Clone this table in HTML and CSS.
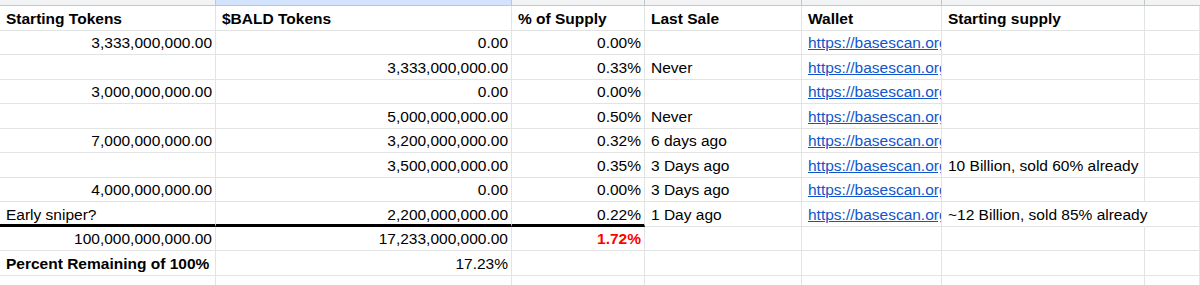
FILE: index.html
```html
<!DOCTYPE html>
<html lang="en">
<head>
<meta charset="utf-8">
<title>$BALD Tokens</title>
<link rel="stylesheet" href="styles.css">
</head>
<body>
<div class="sheet">
  <div class="hd"></div><div class="hd sel"></div><div class="hd"></div><div class="hd"></div><div class="hd"></div><div class="hd"></div><div class="hd last"></div>

  <div class="c b">Starting Tokens</div><div class="c b">$BALD Tokens</div><div class="c b">% of Supply</div><div class="c b">Last Sale</div><div class="c b">Wallet</div><div class="c b">Starting supply</div><div class="c"></div>

  <div class="c r">3,333,000,000.00</div><div class="c r">0.00</div><div class="c r">0.00%</div><div class="c"></div><div class="c lc"><a class="lnk" href="#">https://basescan.org/address</a></div><div class="c"></div><div class="c"></div>

  <div class="c"></div><div class="c r">3,333,000,000.00</div><div class="c r">0.33%</div><div class="c">Never</div><div class="c lc"><a class="lnk" href="#">https://basescan.org/address</a></div><div class="c"></div><div class="c"></div>

  <div class="c r">3,000,000,000.00</div><div class="c r">0.00</div><div class="c r">0.00%</div><div class="c"></div><div class="c lc"><a class="lnk" href="#">https://basescan.org/address</a></div><div class="c"></div><div class="c"></div>

  <div class="c"></div><div class="c r">5,000,000,000.00</div><div class="c r">0.50%</div><div class="c">Never</div><div class="c lc"><a class="lnk" href="#">https://basescan.org/address</a></div><div class="c"></div><div class="c"></div>

  <div class="c r">7,000,000,000.00</div><div class="c r">3,200,000,000.00</div><div class="c r">0.32%</div><div class="c">6 days ago</div><div class="c lc"><a class="lnk" href="#">https://basescan.org/address</a></div><div class="c"></div><div class="c"></div>

  <div class="c"></div><div class="c r">3,500,000,000.00</div><div class="c r">0.35%</div><div class="c">3 Days ago</div><div class="c lc"><a class="lnk" href="#">https://basescan.org/address</a></div><div class="c">10 Billion, sold 60% already</div><div class="c"></div>

  <div class="c r">4,000,000,000.00</div><div class="c r">0.00</div><div class="c r">0.00%</div><div class="c">3 Days ago</div><div class="c lc"><a class="lnk" href="#">https://basescan.org/address</a></div><div class="c"></div><div class="c"></div>

  <div class="c thick">Early sniper?</div><div class="c r thick">2,200,000,000.00</div><div class="c r thick">0.22%</div><div class="c">1 Day ago</div><div class="c lc"><a class="lnk" href="#">https://basescan.org/address</a></div><div class="c ovf">~12 Billion, sold 85% already</div><div class="c"></div>

  <div class="c r">100,000,000,000.00</div><div class="c r">17,233,000,000.00</div><div class="c r b red">1.72%</div><div class="c"></div><div class="c"></div><div class="c"></div><div class="c"></div>

  <div class="c b">Percent Remaining of 100%</div><div class="c r">17.23%</div><div class="c"></div><div class="c"></div><div class="c"></div><div class="c"></div><div class="c"></div>

  <div class="c"></div><div class="c"></div><div class="c"></div><div class="c"></div><div class="c"></div><div class="c"></div><div class="c"></div>
</div>
</body>
</html>
```
FILE: styles.css
```css
html, body {
  margin: 0;
  padding: 0;
  background: #ffffff;
}

body {
  font-family: "Liberation Sans", Arial, sans-serif;
  font-size: 15.5px;
  color: #000000;
  overflow: hidden;
}

.sheet {
  display: grid;
  grid-template-columns: 216px 296px 133px 157px 140px 203px 1fr;
  grid-template-rows: 6px repeat(12, 24.5px);
  height: 285px;
  overflow: hidden;
}

.hd {
  background: #f1f3f4;
  border-bottom: 1px solid #c4c7c5;
  border-right: 1px solid #c4c7c5;
  box-sizing: border-box;
}

.hd.sel {
  background: #d3e3fd;
}

.hd.last {
  border-right: none;
}

.c {
  box-sizing: border-box;
  border-right: 1px solid #e2e3e3;
  border-bottom: 1px solid #e2e3e3;
  display: flex;
  align-items: flex-end;
  padding: 0 3px 2px 6px;
  white-space: nowrap;
  overflow: hidden;
  line-height: 18px;
  min-width: 0;
}

.c.r {
  justify-content: flex-end;
}

.c.lc {
  padding-right: 0;
}

.c.ovf {
  overflow: visible;
  border-right-color: transparent;
  position: relative;
  z-index: 1;
}

.b {
  font-weight: bold;
}

.red {
  color: #ff0000;
}

.thick {
  border-bottom: 3px solid #000000;
  padding-bottom: 0;
}

.lnk {
  display: block;
  min-width: 0;
  overflow: hidden;
  color: #1155cc;
  text-decoration: underline;
  white-space: nowrap;
}
```
